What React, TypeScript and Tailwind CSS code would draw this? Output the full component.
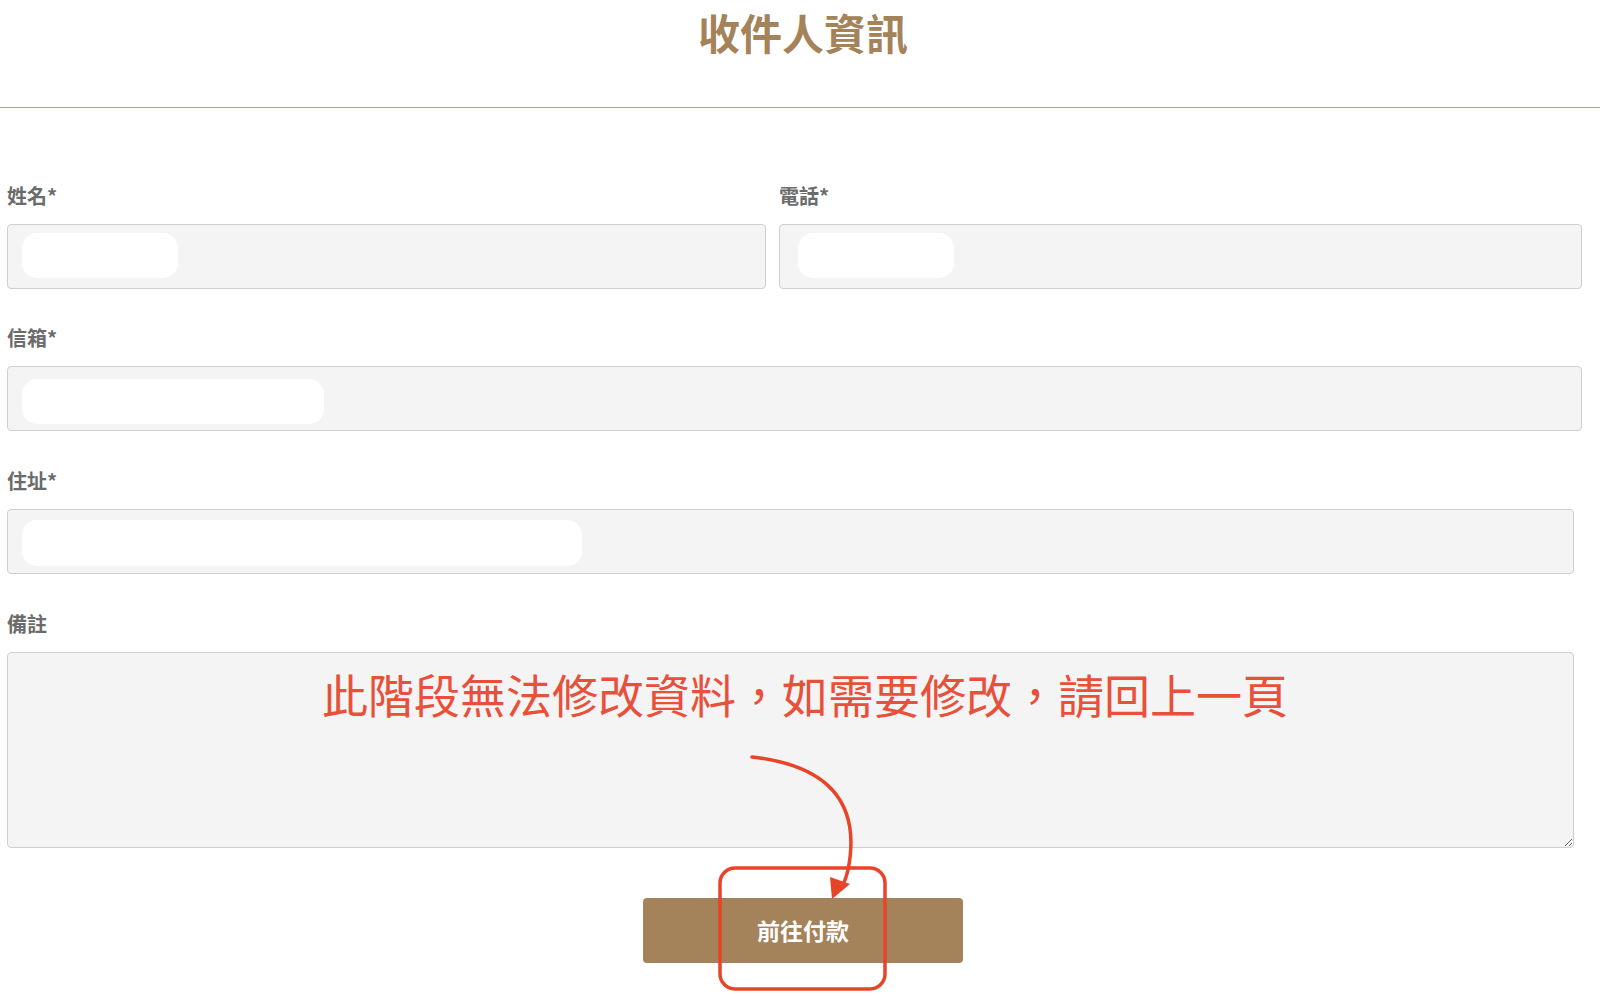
import React from "react";

const font = '"Noto Sans CJK TC", "Noto Sans", sans-serif';

function Field({ label, pill, className }: { label: string; pill: string; className?: string }) {
  return (
    <div className={className}>
      <label className="block h-[24px] text-[20px] leading-[24px] font-semibold text-[#6b6b6b] mb-[16px]">{label}</label>
      <div className="h-[65px] rounded-[4px] border border-[#cfcfcf] bg-[#f4f4f4]">
        <div className={`rounded-[15px] bg-white ${pill}`} />
      </div>
    </div>
  );
}

export default function App() {
  return (
    <div className="relative w-[1600px] h-[996px] overflow-hidden bg-white" style={{ fontFamily: font }}>
      {/* header */}
      <div className="h-[108px] border-b border-[#aca08f] pt-[5px]">
        <h1 className="text-center text-[42px] leading-[54px] font-bold text-[#a5835a] pl-[6px]">收件人資訊</h1>
      </div>

      <div className="pl-[7px] pt-[76px]">
        <div className="flex gap-[13px] mb-[37px]">
          <Field label="姓名*" pill="w-[156px] h-[45px] ml-[14px] mt-[8px]" className="w-[759px]" />
          <Field label="電話*" pill="w-[156px] h-[45px] ml-[18px] mt-[8px]" className="w-[803px]" />
        </div>
        <Field label="信箱*" pill="w-[302px] h-[45px] ml-[14px] mt-[12px]" className="w-[1575px] mb-[38px]" />
        <Field label="住址*" pill="w-[560px] h-[46px] ml-[14px] mt-[10px]" className="w-[1567px] mb-[38px]" />
        <div className="w-[1567px]">
          <label className="block h-[24px] text-[20px] leading-[24px] font-semibold text-[#6b6b6b] mb-[16px]">備註</label>
          <textarea
            readOnly
            className="block w-full h-[196px] rounded-[4px] border border-[#cfcfcf] bg-[#f4f4f4] outline-none"
          />
        </div>
        <div className="flex justify-center pt-[50px] pr-[1px]">
          <button className="w-[320px] h-[65px] rounded-[4px] bg-[#a5835a] text-white text-[23px] font-semibold">
            前往付款
          </button>
        </div>
      </div>

      {/* annotation overlay */}
      <div className="absolute left-[322px] top-[663px] w-[960px] text-center text-[46px] leading-[60px] text-[#e8503a] whitespace-nowrap">
        此階段無法修改資料，如需要修改，請回上一頁
      </div>
      <svg className="absolute left-0 top-0 pointer-events-none" width="1600" height="996">
        <path d="M752 757 C 825 765, 862 800, 848 870 C 845 882, 842 888, 839 890" fill="none" stroke="#e8442a" strokeWidth="3.5" strokeLinecap="round" />
        <polygon points="832,899 830,877 850,884" fill="#e8442a" />
        <rect x="720" y="868" width="165" height="121" rx="15" ry="15" fill="none" stroke="#e8442a" strokeWidth="3.5" />
      </svg>
    </div>
  );
}
